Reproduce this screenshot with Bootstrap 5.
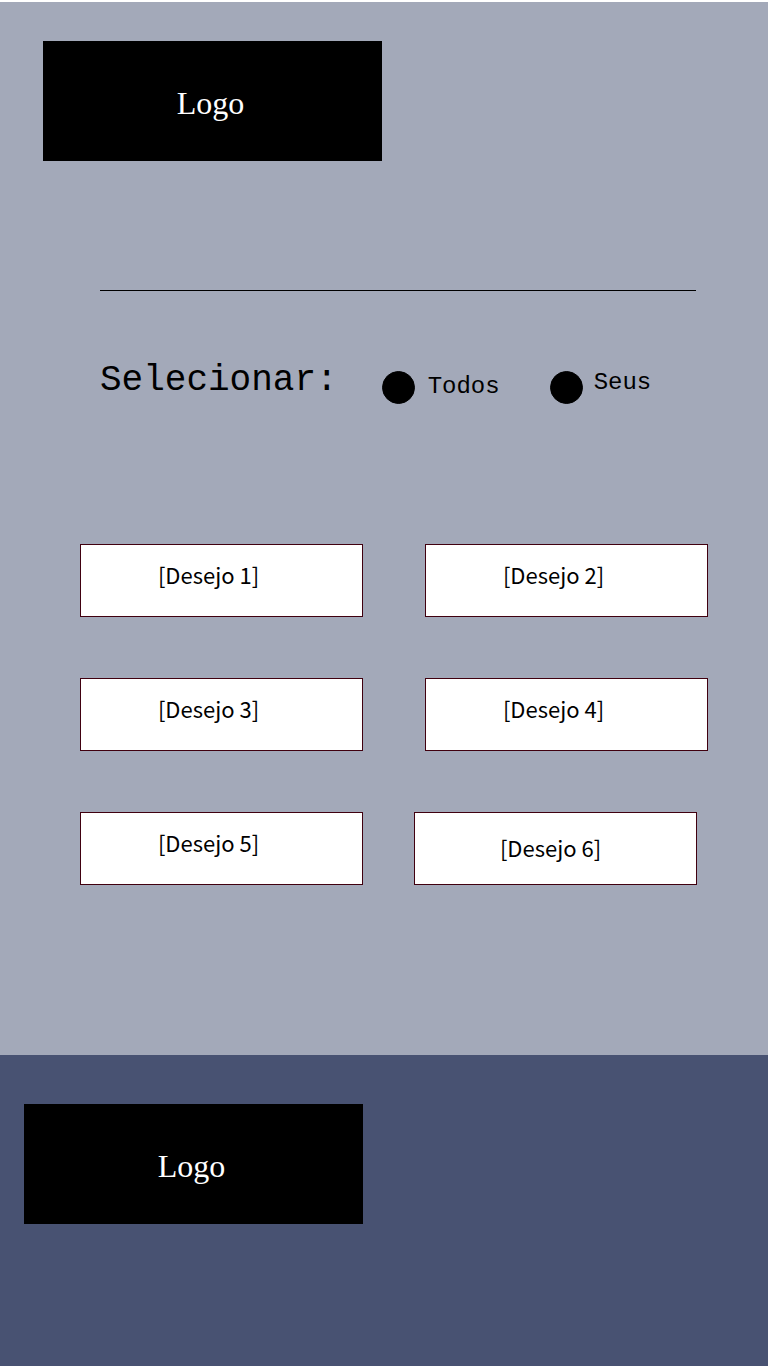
<!DOCTYPE html>
<html lang="pt">
<head>
<meta charset="utf-8">
<meta name="viewport" content="width=device-width, initial-scale=1">
<title>Desejos</title>
<link href="https://cdn.jsdelivr.net/npm/bootstrap@5.3.0/dist/css/bootstrap.min.css" rel="stylesheet">
<style>
  body { background: #a3a9b9; color: #000; border-top: 2px solid #fff; }
  .brand-box { width: 339px; max-width: 100%; height: 120px; padding: 4px 4px 0 0; background: #000; color: #fff; font: 32px/40px "Liberation Serif", serif; }
  .site-header { padding: 39px 43px 0; }
  .filter-area { margin: 129px 72px 0 100px; }
  .filter-area hr { border-top: 1px solid #000; opacity: 1; }
  .filter-row { padding-top: 68px; font: 24px/32px "Liberation Mono", monospace; }
  .filter-title { font: 36px/44px "Liberation Mono", monospace; margin: 0 44px 0 0; }
  .filter-options { column-gap: 50px; padding-top: 12px; }
  .filter-option { column-gap: 13px; }
  .filter-option .form-check-input { width: 33px; height: 33px; margin: 0; background: #000; border-color: #000; }
  .filter-option-raised { column-gap: 11px; }
  .filter-option-raised label { line-height: 24px; }
  .wish-list { padding: 140px 60px 170px 80px; row-gap: 61px; }
  .wish-row { display: grid; grid-template-columns: 1fr 1fr; column-gap: 62px; }
  .wish-row-narrow { column-gap: 51px; padding-right: 11px; }
  .wish { height: 73px; padding: 0 26px 14px 0; background: #fff; border: 1px solid #40000f; font: 22px/32px "Noto Sans CJK SC", sans-serif; }
  .wish-centered { padding: 0 10px 4px 0; }
  .site-footer { background: #485272; padding: 49px 24px; }
</style>
</head>
<body class="d-flex flex-column min-vh-100">
  <header class="site-header">
    <div class="brand-box d-flex align-items-center justify-content-center">Logo</div>
  </header>
  <main>
    <section class="filter-area">
      <hr class="m-0">
      <div class="filter-row d-flex flex-wrap align-items-start">
        <h1 class="filter-title">Selecionar:</h1>
        <div class="filter-options d-flex flex-wrap" role="radiogroup" aria-label="Selecionar">
          <div class="filter-option d-flex align-items-start">
            <input class="form-check-input" type="radio" name="filtro" id="todos">
            <label for="todos">Todos</label>
          </div>
          <div class="filter-option filter-option-raised d-flex align-items-start">
            <input class="form-check-input" type="radio" name="filtro" id="seus">
            <label for="seus">Seus</label>
          </div>
        </div>
      </div>
    </section>
    <section class="wish-list d-flex flex-column">
      <div class="wish-row">
        <div class="wish d-flex align-items-center justify-content-center">[Desejo 1]</div>
        <div class="wish d-flex align-items-center justify-content-center">[Desejo 2]</div>
      </div>
      <div class="wish-row">
        <div class="wish d-flex align-items-center justify-content-center">[Desejo 3]</div>
        <div class="wish d-flex align-items-center justify-content-center">[Desejo 4]</div>
      </div>
      <div class="wish-row wish-row-narrow">
        <div class="wish d-flex align-items-center justify-content-center">[Desejo 5]</div>
        <div class="wish wish-centered d-flex align-items-center justify-content-center">[Desejo 6]</div>
      </div>
    </section>
  </main>
  <footer class="site-footer flex-grow-1">
    <div class="brand-box d-flex align-items-center justify-content-center">Logo</div>
  </footer>
<script src="https://cdn.jsdelivr.net/npm/bootstrap@5.3.0/dist/js/bootstrap.bundle.min.js"></script>
</body>
</html>
